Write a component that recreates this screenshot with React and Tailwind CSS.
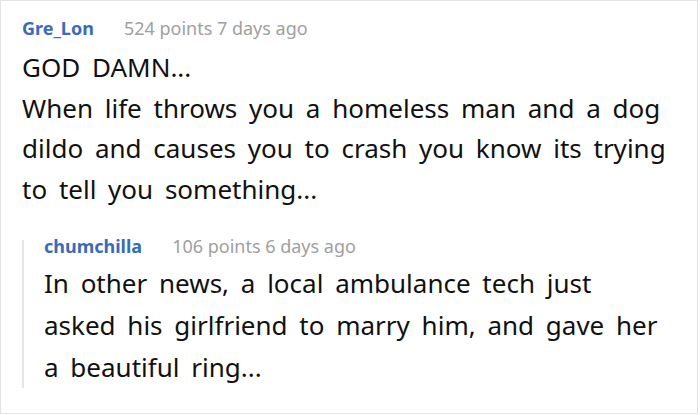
export default function App() {
  return (
    <div className="w-[700px] h-[415px] bg-white" style={{ fontFamily: '"Noto Sans", "Open Sans", sans-serif' }}>
      <div className="w-[698px] h-[414px] border border-[#e3e3e3] pl-[21px] pt-[13px]">
        <div className="flex items-baseline gap-[30px] text-[18px] leading-[28px]">
          <span className="font-bold text-[#3a6bb8]">Gre_Lon</span>
          <span className="text-[#a0a0a0]">524 points 7 days ago</span>
        </div>
        <p className="text-[26px] leading-[40.5px] [word-spacing:5px] text-[#111] mt-[5px] pr-[20px]">
          GOD DAMN...
          <br />
          When life throws you a homeless man and a dog dildo and causes you to crash you know its trying to tell you something...
        </p>
        <div className="mt-[31px] border-l-2 border-[#e6e6e6] pl-[20px]">
          <div className="flex items-baseline gap-[30px] text-[18px] leading-[12px]">
            <span className="font-bold text-[#3a6bb8]">chumchilla</span>
            <span className="text-[#a0a0a0]">106 points 6 days ago</span>
          </div>
          <p className="text-[26px] leading-[42px] [word-spacing:5px] text-[#111] mt-[10px] -mb-[8px] pr-[28px]">
            In other news, a local ambulance tech just asked his girlfriend to marry him, and gave her a beautiful ring...
          </p>
        </div>
      </div>
    </div>
  );
}
